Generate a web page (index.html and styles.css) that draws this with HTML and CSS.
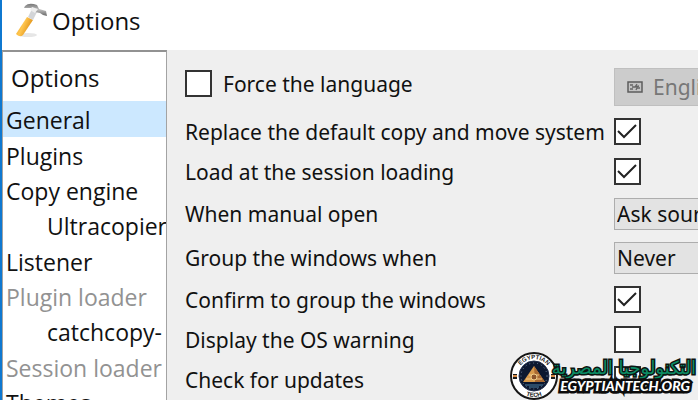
FILE: index.html
```html
<!DOCTYPE html>
<html lang="en">
<head>
<meta charset="utf-8">
<title>Options</title>
<link rel="stylesheet" href="styles.css">
</head>
<body>
<div class="window">
  <header class="titlebar">
    <svg class="hammer" viewBox="0 0 34 36" aria-hidden="true">
      <defs>
        <linearGradient id="wood" x1="0" y1="0" x2="1" y2="0.5">
          <stop offset="0" stop-color="#e59a18"/><stop offset=".5" stop-color="#ffc64f"/><stop offset="1" stop-color="#d9860c"/>
        </linearGradient>
        <linearGradient id="steel" x1="0" y1="0" x2="0" y2="1">
          <stop offset="0" stop-color="#777"/><stop offset=".5" stop-color="#bbb"/><stop offset="1" stop-color="#666"/>
        </linearGradient>
      </defs>
      <ellipse cx="13" cy="33" rx="9" ry="2" fill="#e6e6e6"/>
      <path d="M12 15L18 18L8 33Q5 36 1 32Z" fill="url(#wood)"/>
      <path d="M17 7L22 10L18 18L13 15Z" fill="#d3d5d8"/>
      <path d="M10 4Q14 0 22 3L24 7L31 9L32 14L28 13L25 11L20 10L16 6L9 6Z" fill="url(#steel)"/>
      <path d="M17 5L23 7L20 11L15 8Z" fill="#eee"/>
    </svg>
    <h1 class="title">Options</h1>
  </header>
  <div class="body">
    <nav class="tree" aria-label="Options">
      <div class="tree-head">Options</div>
      <ul class="tree-list">
        <li class="item selected">General</li>
        <li class="item">Plugins</li>
        <li class="item">Copy engine</li>
        <li class="item child">Ultracopier</li>
        <li class="item">Listener</li>
        <li class="item muted">Plugin loader</li>
        <li class="item child">catchcopy-</li>
        <li class="item muted">Session loader</li>
        <li class="item">Themes</li>
      </ul>
    </nav>
    <form class="form">
      <div class="force">
        <input class="check" type="checkbox" id="force">
        <label for="force">Force the language</label>
      </div>
      <div class="language">
        <svg class="flag" viewBox="0 0 16 12" aria-hidden="true">
          <path d="M1 1H15V11H1Z" fill="#c4c4c4" stroke="#5c5c5c" stroke-width="1.5"/>
          <path d="M3 4H6M10 3L8 6H5M8 6L12 5M3 8H6M9 9L10 7H13" fill="none" stroke="#666" stroke-width="1.3"/>
        </svg>
        <select class="select tall" aria-label="Language" disabled><option>English</option></select>
      </div>

      <label for="replace">Replace the default copy and move system</label>
      <input class="check" type="checkbox" id="replace" checked>

      <label for="load">Load at the session loading</label>
      <input class="check" type="checkbox" id="load" checked>

      <label for="manual">When manual open</label>
      <select class="select" id="manual"><option>Ask sources as folder</option></select>

      <label for="group">Group the windows when</label>
      <select class="select" id="group"><option>Never</option></select>

      <label for="confirm">Confirm to group the windows</label>
      <input class="check" type="checkbox" id="confirm" checked>

      <label for="warning">Display the OS warning</label>
      <input class="check" type="checkbox" id="warning">

      <label for="updates">Check for updates</label>
      <input class="check" type="checkbox" id="updates">
    </form>
  </div>
</div>
<div class="brand">
  <svg class="seal" viewBox="0 0 48 48" aria-hidden="true">
    <defs>
      <path id="arc-top" d="M7 24A17 17 0 0 1 41 24"/>
      <path id="arc-bottom" d="M3 24A21 21 0 0 0 45 24"/>
    </defs>
    <circle cx="24" cy="24" r="23" fill="#fff" stroke="#161616" stroke-width="2"/>
    <circle cx="24" cy="24" r="15" fill="#0c1830" stroke="#23304d"/>
    <circle cx="24" cy="24" r="13" fill="none" stroke="#70839d" stroke-dasharray="1 3"/>
    <path d="M24 14L35 30H13Z" fill="#d79a4c"/>
    <path d="M24 14L35 30H25Z" fill="#a96a33"/>
    <path d="M16 27H32M19 23H29" stroke="#f0c785" stroke-width="1"/>
    <circle cx="24" cy="25" r="3" fill="#8b542c" stroke="#f2cf88"/>
    <path d="M15 33H33M19 35H29" stroke="#4d7fa0" stroke-width="1"/>
    <path d="M3 22H7V27H3ZM41 22H45V27H41Z" fill="#1b1b1b"/>
    <path d="M3 24H7M41 24H45" stroke="#d58a45" stroke-width="2"/>
    <text class="seal-text"><textPath href="#arc-top" startOffset="50%" text-anchor="middle">EGYPTIAN</textPath></text>
    <text class="seal-text"><textPath href="#arc-bottom" startOffset="50%" text-anchor="middle">TECH</textPath></text>
  </svg>
  <div class="brand-text">
    <span class="brand-ar" lang="ar" dir="rtl">التكنولوجيا المصرية</span>
    <span class="brand-en">EGYPTIANTECH.ORG</span>
  </div>
</div>
</body>
</html>
```

FILE: styles.css
```css
* { box-sizing: border-box; }

body {
  margin: 0;
  height: 100vh;
  overflow: hidden;
  background: #efefef;
  color: #111;
  font: 21px/28px "Noto Sans", "Open Sans", sans-serif;
}

.window {
  display: flex;
  flex-direction: column;
  height: 100vh;
  border-left: 2px solid #0f78d0;
}

.titlebar {
  display: flex;
  flex: none;
  align-items: flex-start;
  gap: 3px;
  height: 50px;
  padding: 2px 13px;
  background: #fff;
}

.hammer { width: 34px; height: 36px; }

.title {
  margin: 3px 0 0;
  font: 24px/32px "Open Sans", sans-serif;
}

.body {
  display: flex;
  flex: 1;
  min-height: 0;
}

.tree {
  flex: none;
  width: 165px;
  overflow: hidden;
  border: 1px solid #a3a3a3;
  border-top: 2px solid #929292;
  border-bottom: 0;
  background: #fff;
  font: 24px/36px "Open Sans", sans-serif;
  white-space: nowrap;
}

.tree-head { padding: 8px 8px 5px; }

.tree-list {
  margin: 0;
  padding: 0;
  font-size: 23px;
  line-height: 38px;
  list-style: none;
}

.item { height: 35px; padding-left: 3px; }
.selected { height: 36px; background: #cce8ff; }
.child { height: 36px; padding-left: 44px; }
.muted { color: #929292; }

.form {
  display: grid;
  flex: 1;
  grid-template-columns: minmax(417px, max-content) minmax(160px, 1fr);
  grid-auto-rows: min-content;
  gap: 12px;
  align-items: center;
  min-width: 0;
  overflow: hidden;
  padding: 18px 0 0 18px;
  white-space: nowrap;
}

.form label { line-height: 28px; }

.force {
  display: flex;
  align-items: center;
  gap: 11px;
  padding-bottom: 6px;
}

.check {
  appearance: none;
  width: 27px;
  height: 27px;
  margin: 0 0 1px;
  border: 2px solid #333;
  background: #fff;
}

.check:checked {
  background: #fff url("data:image/svg+xml,%3Csvg xmlns='http://www.w3.org/2000/svg' viewBox='0 0 23 23'%3E%3Cpath d='M2 11L8 17L20 5' fill='none' stroke='%23222' stroke-width='2'/%3E%3C/svg%3E") center / 23px 23px no-repeat;
}

.language {
  position: relative;
  display: flex;
}

.flag {
  position: absolute;
  top: 13px;
  left: 13px;
  width: 16px;
  height: 12px;
}

.select {
  appearance: none;
  width: 100%;
  height: 32px;
  padding: 0 2px;
  border: 1px solid #adadad;
  border-radius: 0;
  background: #e3e3e3;
  color: #111;
  font: inherit;
}

.tall {
  height: 38px;
  padding-left: 38px;
  border-color: #bfbfbf;
  background: #cccccc;
  color: #777;
  opacity: 1;
}

.brand {
  position: absolute;
  right: 2px;
  bottom: 0;
  display: flex;
  align-items: flex-end;
}

.seal { width: 48px; height: 48px; margin-right: -6px; }

.seal-text {
  fill: #222;
  font: bold 6px "Liberation Sans", sans-serif;
}

.brand-text {
  display: flex;
  flex-direction: column;
  align-items: flex-end;
  padding-bottom: 6px;
  white-space: nowrap;
}

.brand-ar {
  color: #0b8a63;
  font: 18px/20px "DejaVu Sans", sans-serif;
  -webkit-text-stroke: 3px #0c1512;
  paint-order: stroke fill;
}

.brand-en {
  padding-right: 6px;
  color: #fff;
  font: italic 900 14px/16px Lato, sans-serif;
  -webkit-text-stroke: 5px #0c0c0c;
  paint-order: stroke fill;
}
```
